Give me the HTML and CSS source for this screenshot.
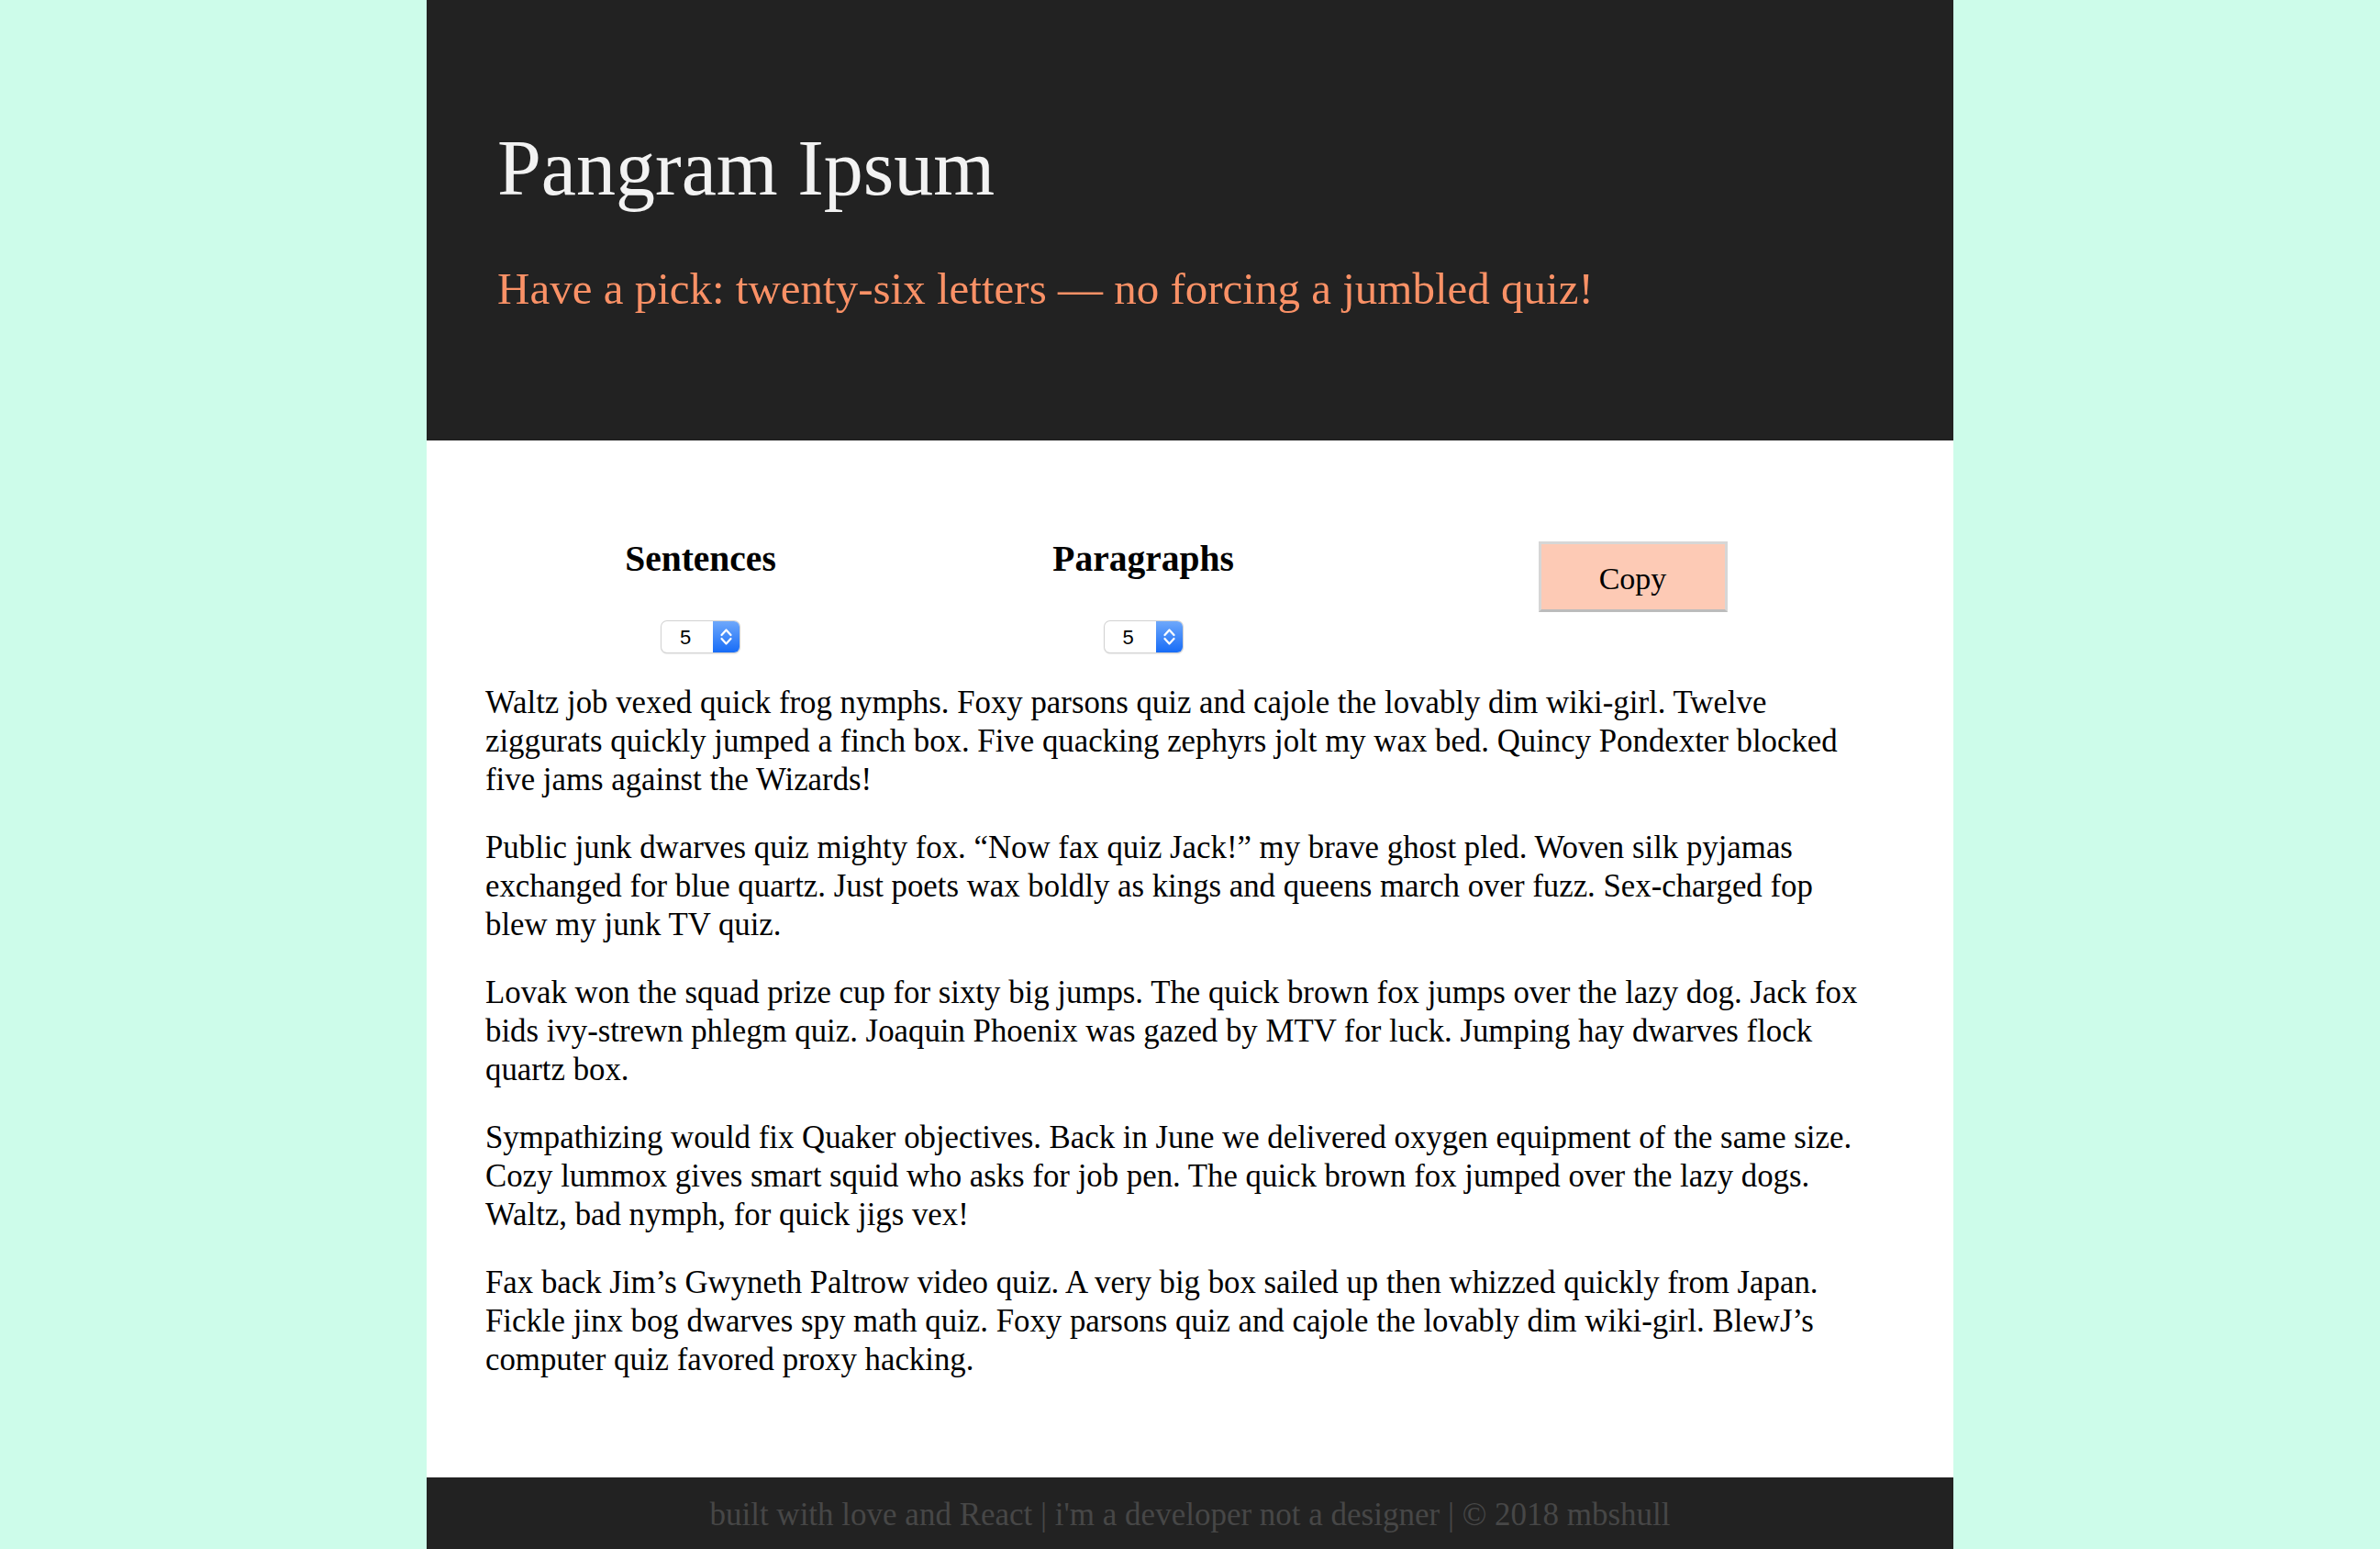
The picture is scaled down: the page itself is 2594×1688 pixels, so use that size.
FILE: index.html
```html
<!DOCTYPE html>
<html lang="en">
<head>
<meta charset="utf-8">
<title>Pangram Ipsum</title>
<link rel="stylesheet" href="styles.css">
</head>
<body>
<div class="page">
  <header class="hero">
    <h1 class="title">Pangram Ipsum</h1>
    <h2 class="tagline">Have a pick: twenty-six letters — no forcing a jumbled quiz!</h2>
  </header>
  <main class="content">
    <div class="controls">
      <div class="control">
        <h3 class="control-label">Sentences</h3>
        <div class="stepper-select">
          <select class="num-select"><option>5</option></select>
          <span class="stepper"><svg width="29" height="34" viewBox="0 0 29 34"><polyline points="9.5,15 14.5,9.5 19.5,15" /><polyline points="9.5,19 14.5,24.5 19.5,19" /></svg></span>
        </div>
      </div>
      <div class="control">
        <h3 class="control-label">Paragraphs</h3>
        <div class="stepper-select">
          <select class="num-select"><option>5</option></select>
          <span class="stepper"><svg width="29" height="34" viewBox="0 0 29 34"><polyline points="9.5,15 14.5,9.5 19.5,15" /><polyline points="9.5,19 14.5,24.5 19.5,19" /></svg></span>
        </div>
      </div>
      <div class="control">
        <button class="copy-btn">Copy</button>
      </div>
    </div>
    <div class="text">
      <p>Waltz job vexed quick frog nymphs. Foxy parsons quiz and cajole the lovably dim wiki-girl. Twelve ziggurats quickly jumped a finch box. Five quacking zephyrs jolt my wax bed. Quincy Pondexter blocked five jams against the Wizards!</p>
      <p>Public junk dwarves quiz mighty fox. “Now fax quiz Jack!” my brave ghost pled. Woven silk pyjamas exchanged for blue quartz. Just poets wax boldly as kings and queens march over fuzz. Sex-charged fop blew my junk TV quiz.</p>
      <p>Lovak won the squad prize cup for sixty big jumps. The quick brown fox jumps over the lazy dog. Jack fox bids ivy-strewn phlegm quiz. Joaquin Phoenix was gazed by MTV for luck. Jumping hay dwarves flock quartz box.</p>
      <p>Sympathizing would fix Quaker objectives. Back in June we delivered oxygen equipment of the same size. Cozy lummox gives smart squid who asks for job pen. The quick brown fox jumped over the lazy dogs. Waltz, bad nymph, for quick jigs vex!</p>
      <p>Fax back Jim’s Gwyneth Paltrow video quiz. A very big box sailed up then whizzed quickly from Japan. Fickle jinx bog dwarves spy math quiz. Foxy parsons quiz and cajole the lovably dim wiki-girl. BlewJ’s computer quiz favored proxy hacking.</p>
    </div>
  </main>
  <footer class="footer">built with love and React | i'm a developer not a designer | © 2018 mbshull</footer>
</div>
</body>
</html>
```

FILE: styles.css
```css
html, body {
  margin: 0;
  padding: 0;
}

body {
  background: #cdfcea;
  font-family: "Liberation Serif", "Times New Roman", serif;
  color: #000;
}

.page {
  width: 1664px;
  margin: 0 auto;
}

.hero {
  background: #222222;
  padding: 133px 77px 135px;
}

.title {
  margin: 0;
  font-size: 86px;
  line-height: 100px;
  font-weight: normal;
  color: #f2f2f2;
}

.tagline {
  margin: 52px 0 0;
  font-size: 49px;
  line-height: 60px;
  font-weight: normal;
  color: #fa9166;
}

.content {
  background: #ffffff;
  padding: 108px 64px 75px;
}

.controls {
  display: grid;
  grid-template-columns: 469px 496px 1fr;
  align-items: start;
  justify-items: center;
}

.control {
  display: flex;
  flex-direction: column;
  align-items: center;
}

.control-label {
  margin: 0;
  font-size: 39.5px;
  line-height: 42px;
  font-weight: bold;
}

.stepper-select {
  margin-top: 47px;
  width: 85px;
  height: 34px;
  display: flex;
  border-radius: 6px;
  background: #fff;
  overflow: hidden;
  box-shadow: 0 0 0 1px #d2d2d2, 0 1px 2px rgba(0, 0, 0, 0.25);
}

.num-select {
  appearance: none;
  -webkit-appearance: none;
  border: 0;
  outline: none;
  background: transparent;
  width: 56px;
  height: 34px;
  padding: 0 0 0 20px;
  margin: 0;
  font-family: "Liberation Sans", Arial, sans-serif;
  font-size: 22px;
  color: #000;
}

.stepper {
  width: 29px;
  height: 34px;
  background: linear-gradient(#6ea8fb, #176cf7);
  display: flex;
}

.stepper polyline {
  fill: none;
  stroke: #ffffff;
  stroke-width: 2.2;
  stroke-linecap: round;
  stroke-linejoin: round;
}

.copy-btn {
  margin-top: 2px;
  width: 206px;
  height: 77px;
  background: #fdcab5;
  border: 3px solid #d6d6d6;
  border-bottom-color: #bcbcbc;
  font-family: "Liberation Serif", "Times New Roman", serif;
  font-size: 34px;
  color: #000;
  padding: 4px 0 0;
}

.text {
  margin-top: 34px;
  padding-right: 28px;
}

.text p {
  margin: 0 0 32px;
  font-size: 34.8px;
  line-height: 42px;
}

.footer {
  background: #222222;
  color: #474747;
  text-align: center;
  font-size: 35px;
  line-height: 42px;
  padding: 20px 0 60px;
}
```
